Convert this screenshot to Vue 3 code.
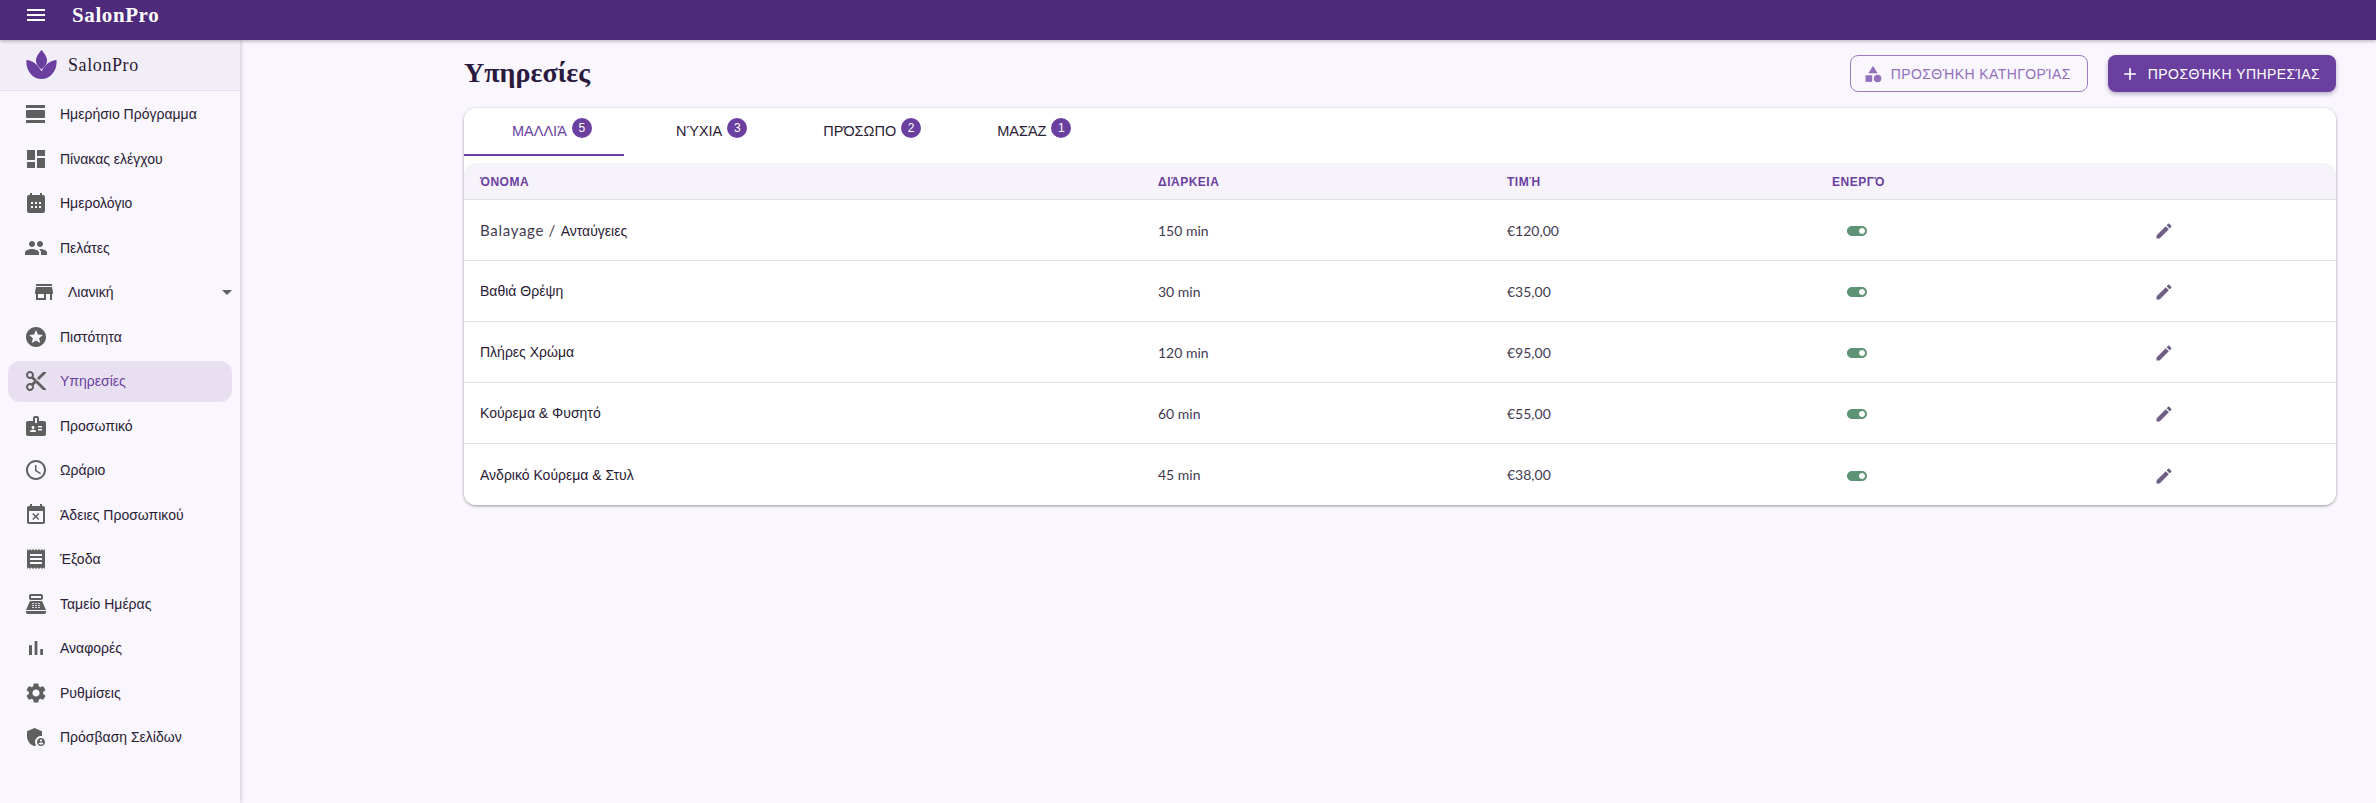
<script setup>
const nav = [
  { label: 'Ημερήσιο Πρόγραμμα', d: 'M2 21h19v-3H2v3zM20 8H3c-.55 0-1 .45-1 1v6c0 .55.45 1 1 1h17c.55 0 1-.45 1-1V9c0-.55-.45-1-1-1zM2 3v3h19V3H2z' },
  { label: 'Πίνακας ελέγχου', d: 'M3 13h8V3H3v10zm0 8h8v-6H3v6zm10 0h8V11h-8v10zm0-18v6h8V3h-8z' },
  { label: 'Ημερολόγιο', d: 'M19 4h-1V2h-2v2H8V2H6v2H5c-1.11 0-2 .9-2 2v14c0 1.1.89 2 2 2h14c1.1 0 2-.9 2-2V6c0-1.1-.9-2-2-2zM7 11h2v2H7zm4 0h2v2h-2zm4 0h2v2h-2zM7 15h2v2H7zm4 0h2v2h-2zm4 0h2v2h-2z', evenodd: true },
  { label: 'Πελάτες', d: 'M16 11c1.66 0 2.99-1.34 2.99-3S17.66 5 16 5c-1.66 0-3 1.34-3 3s1.34 3 3 3zm-8 0c1.66 0 2.99-1.34 2.99-3S9.66 5 8 5C6.34 5 5 6.34 5 8s1.34 3 3 3zm0 2c-2.33 0-7 1.17-7 3.5V19h14v-2.5c0-2.33-4.67-3.5-7-3.5zm8 0c-.29 0-.62.02-.97.05 1.16.84 1.97 1.97 1.97 3.45V19h6v-2.5c0-2.33-4.67-3.5-7-3.5z' },
  { label: 'Λιανική', sub: true, d: 'M20 4H4v2h16V4zm1 10v-2l-1-5H4l-1 5v2h1v6h10v-6h4v6h2v-6h1zm-9 4H6v-4h6v4z' },
  { label: 'Πιστότητα', d: 'M11.99 2C6.47 2 2 6.48 2 12s4.47 10 9.99 10C17.52 22 22 17.52 22 12S17.52 2 11.99 2zm4.24 16L12 15.45 7.77 18l1.12-4.81-3.73-3.23 4.92-.42L12 5l1.92 4.53 4.92.42-3.73 3.23L16.23 18z' },
  { label: 'Υπηρεσίες', active: true, d: 'M9.64 7.64c.23-.5.36-1.05.36-1.64 0-2.21-1.79-4-4-4S2 3.79 2 6s1.79 4 4 4c.59 0 1.14-.13 1.64-.36L10 12l-2.36 2.36C7.14 14.13 6.59 14 6 14c-2.21 0-4 1.79-4 4s1.79 4 4 4 4-1.79 4-4c0-.59-.13-1.14-.36-1.64L12 14l7 7h3v-1L9.64 7.64zM6 8c-1.1 0-2-.89-2-2s.9-2 2-2 2 .89 2 2-.9 2-2 2zm0 12c-1.1 0-2-.89-2-2s.9-2 2-2 2 .89 2 2-.9 2-2 2zm6-7.5c-.28 0-.5-.22-.5-.5s.22-.5.5-.5.5.22.5.5-.22.5-.5.5zM19 3l-6 6 2 2 7-7V3h-3z' },
  { label: 'Προσωπικό', d: 'M20 7h-5V4c0-1.1-.9-2-2-2h-2c-1.1 0-2 .9-2 2v3H4c-1.1 0-2 .9-2 2v11c0 1.1.9 2 2 2h16c1.1 0 2-.9 2-2V9c0-1.1-.9-2-2-2zM9 12c.83 0 1.5.67 1.5 1.5S9.83 15 9 15s-1.5-.67-1.5-1.5S8.17 12 9 12zm3 6H6v-.75c0-1 2-1.5 3-1.5s3 .5 3 1.5V18zm1-9h-2V4h2v5zm5 7.5h-4V15h4v1.5zm0-3h-4V12h4v1.5z' },
  { label: 'Ωράριο', d: 'M11.99 2C6.47 2 2 6.48 2 12s4.47 10 9.99 10C17.52 22 22 17.52 22 12S17.52 2 11.99 2zM12 20c-4.42 0-8-3.58-8-8s3.58-8 8-8 8 3.58 8 8-3.58 8-8 8zM12.5 7H11v6l5.25 3.15.75-1.23-4.5-2.67z' },
  { label: 'Άδειες Προσωπικού', d: 'M9.31 17l2.44-2.44L14.19 17l1.06-1.06-2.44-2.44 2.44-2.44L14.19 10l-2.44 2.44L9.31 10l-1.06 1.06 2.44 2.44-2.44 2.44L9.31 17zM19 3h-1V1h-2v2H8V1H6v2H5c-1.11 0-1.99.9-1.99 2L3 19c0 1.1.89 2 2 2h14c1.1 0 2-.9 2-2V5c0-1.1-.9-2-2-2zm0 16H5V8h14v11z' },
  { label: 'Έξοδα', d: 'M18 17H6v-2h12v2zm0-4H6v-2h12v2zm0-4H6V7h12v2zM3 22l1.5-1.5L6 22l1.5-1.5L9 22l1.5-1.5L12 22l1.5-1.5L15 22l1.5-1.5L18 22l1.5-1.5L21 22V2l-1.5 1.5L18 2l-1.5 1.5L15 2l-1.5 1.5L12 2l-1.5 1.5L9 2 7.5 3.5 6 2 4.5 3.5 3 2v20z' },
  { label: 'Ταμείο Ημέρας', d: 'M17 2H7c-1.1 0-2 .9-2 2v2c0 1.1.9 2 2 2h10c1.1 0 2-.9 2-2V4c0-1.1-.9-2-2-2zm0 4H7V4h10v2zm3 16H4c-1.1 0-2-.9-2-2v-1h20v1c0 1.1-.9 2-2 2zm-1.47-11.81C18.21 9.47 17.49 9 16.7 9H7.3c-.79 0-1.51.47-1.83 1.19L2 18h20l-3.47-7.81zM9.5 16h-1c-.28 0-.5-.22-.5-.5s.22-.5.5-.5h1c.28 0 .5.22.5.5s-.22.5-.5.5zm0-2h-1c-.28 0-.5-.22-.5-.5s.22-.5.5-.5h1c.28 0 .5.22.5.5s-.22.5-.5.5zm0-2h-1c-.28 0-.5-.22-.5-.5s.22-.5.5-.5h1c.28 0 .5.22.5.5s-.22.5-.5.5zm3 4h-1c-.28 0-.5-.22-.5-.5s.22-.5.5-.5h1c.28 0 .5.22.5.5s-.22.5-.5.5zm0-2h-1c-.28 0-.5-.22-.5-.5s.22-.5.5-.5h1c.28 0 .5.22.5.5s-.22.5-.5.5zm0-2h-1c-.28 0-.5-.22-.5-.5s.22-.5.5-.5h1c.28 0 .5.22.5.5s-.22.5-.5.5zm3 4h-1c-.28 0-.5-.22-.5-.5s.22-.5.5-.5h1c.28 0 .5.22.5.5s-.22.5-.5.5zm0-2h-1c-.28 0-.5-.22-.5-.5s.22-.5.5-.5h1c.28 0 .5.22.5.5s-.22.5-.5.5zm0-2h-1c-.28 0-.5-.22-.5-.5s.22-.5.5-.5h1c.28 0 .5.22.5.5s-.22.5-.5.5z' },
  { label: 'Αναφορές', d: 'M5 9.2h3V19H5zM10.6 5h2.8v14h-2.8zm5.6 8H19v6h-2.8z' },
  { label: 'Ρυθμίσεις', d: 'M19.14 12.94c.04-.3.06-.61.06-.94 0-.32-.02-.64-.07-.94l2.03-1.58c.18-.14.23-.41.12-.61l-1.92-3.32c-.12-.22-.37-.29-.59-.22l-2.39.96c-.5-.38-1.03-.7-1.62-.94l-.36-2.54c-.04-.24-.24-.41-.48-.41h-3.84c-.24 0-.43.17-.47.41l-.36 2.54c-.59.24-1.13.57-1.62.94l-2.39-.96c-.22-.08-.47 0-.59.22L2.74 8.87c-.12.21-.08.47.12.61l2.03 1.58c-.05.3-.09.63-.09.94s.02.64.07.94l-2.03 1.58c-.18.14-.23.41-.12.61l1.92 3.32c.12.22.37.29.59.22l2.39-.96c.5.38 1.03.7 1.62.94l.36 2.54c.05.24.24.41.48.41h3.84c.24 0 .44-.17.47-.41l.36-2.54c.59-.24 1.13-.56 1.62-.94l2.39.96c.22.08.47 0 .59-.22l1.92-3.32c.12-.22.07-.47-.12-.61l-2.01-1.58zM12 15.6c-1.98 0-3.6-1.62-3.6-3.6s1.62-3.6 3.6-3.6 3.6 1.62 3.6 3.6-1.62 3.6-3.6 3.6z' },
  { label: 'Πρόσβαση Σελίδων', d: 'M17 11c.34 0 .67.04 1 .09V6.27L10.5 3 3 6.27v4.91c0 4.54 3.2 8.79 7.5 9.82.55-.13 1.08-.32 1.6-.55-.69-.98-1.1-2.17-1.1-3.45 0-3.31 2.69-6 6-6zM17 13c-2.21 0-4 1.79-4 4s1.79 4 4 4 4-1.79 4-4-1.79-4-4-4zm0 1.38c.62 0 1.12.51 1.12 1.12s-.51 1.12-1.12 1.12-1.12-.51-1.12-1.12.5-1.12 1.12-1.12zm0 5.37c-.93 0-1.74-.46-2.24-1.17.05-.72 1.51-1.08 2.24-1.08s2.19.36 2.24 1.08c-.5.71-1.31 1.17-2.24 1.17z' }
];

const tabs = [
  { label: 'ΜΑΛΛΙΆ', count: 5, active: true },
  { label: 'ΝΎΧΙΑ', count: 3 },
  { label: 'ΠΡΌΣΩΠΟ', count: 2 },
  { label: 'ΜΑΣΆΖ', count: 1 }
];

// latin is the part of the name that the page's Latin webfont picks up
const rows = [
  { latin: 'Balayage / ', name: 'Ανταύγειες', time: '150 min', price: '€120,00' },
  { name: 'Βαθιά Θρέψη', time: '30 min', price: '€35,00' },
  { name: 'Πλήρες Χρώμα', time: '120 min', price: '€95,00' },
  { name: 'Κούρεμα & Φυσητό', time: '60 min', price: '€55,00' },
  { name: 'Ανδρικό Κούρεμα & Στυλ', time: '45 min', price: '€38,00' }
];
</script>

<template>
  <div class="app">
    <header class="topbar">
      <svg class="menu-icon" viewBox="0 0 24 24"><path d="M3 18h18v-2H3v2zm0-5h18v-2H3v2zm0-7v2h18V6H3z" /></svg>
      <span class="top-title">SalonPro</span>
    </header>
    <div class="body">
      <aside class="sidebar">
        <div class="brand">
          <svg class="logo" viewBox="0 0 32 32">
            <path d="M15.5 1c3 3.5 6 7.500 5.500 11.500-.5 3-2.500 5.500-5.500 8-3-2.500-5-5-5.500-8C9.500 8.500 12.500 4.500 15.500 1z" />
            <path d="M.5 11c5.500.5 11 3.500 15 11.500 4-8 9.500-11 15-11.500 1 10.500-6 19-15 19S-.5 21.500.5 11z" />
          </svg>
          <span>SalonPro</span>
        </div>
        <nav class="nav">
          <div v-for="item in nav" :key="item.label" class="nav-item" :class="{ active: item.active, sub: item.sub }">
            <svg class="nav-icon" viewBox="0 0 24 24"><path :d="item.d" :fill-rule="item.evenodd ? 'evenodd' : null" /></svg>
            <span class="nav-label">{{ item.label }}</span>
            <svg v-if="item.sub" class="caret" viewBox="0 0 24 24"><path d="M7 10l5 5 5-5z" /></svg>
          </div>
        </nav>
      </aside>
      <main class="main">
        <div class="page-head">
          <h1>Υπηρεσίες</h1>
          <div class="actions">
            <button class="btn outline">
              <svg viewBox="0 0 24 24"><path d="M12 2l-5.500 9h11z" /><circle cx="17.500" cy="17.500" r="4.500" /><path d="M3 13.500h8v8H3z" /></svg>
              ΠΡΟΣΘΉΚΗ ΚΑΤΗΓΟΡΊΑΣ
            </button>
            <button class="btn filled">
              <svg viewBox="0 0 24 24"><path d="M19 13h-6v6h-2v-6H5v-2h6V5h2v6h6v2z" /></svg>
              ΠΡΟΣΘΉΚΗ ΥΠΗΡΕΣΊΑΣ
            </button>
          </div>
        </div>
        <section class="card">
          <div class="tabs">
            <div v-for="tab in tabs" :key="tab.label" class="tab" :class="{ active: tab.active }">
              {{ tab.label }}<span class="badge">{{ tab.count }}</span>
            </div>
          </div>
          <div class="table">
            <div class="row head">
              <div>ΌΝΟΜΑ</div>
              <div>ΔΙΆΡΚΕΙΑ</div>
              <div>ΤΙΜΉ</div>
              <div>ΕΝΕΡΓΌ</div>
              <div></div>
            </div>
            <div v-for="row in rows" :key="row.name" class="row">
              <div class="name"><span v-if="row.latin" class="latin wide">{{ row.latin }}</span>{{ row.name }}</div>
              <div class="latin">{{ row.time }}</div>
              <div class="latin">{{ row.price }}</div>
              <div>
                <svg class="toggle" viewBox="0 0 24 24"><path d="M17 7H7c-2.760 0-5 2.240-5 5s2.240 5 5 5h10c2.760 0 5-2.240 5-5s-2.240-5-5-5zm0 8c-1.660 0-3-1.340-3-3s1.340-3 3-3 3 1.340 3 3-1.340 3-3 3z" /></svg>
              </div>
              <div>
                <svg class="edit" viewBox="0 0 24 24"><path d="M3 17.250V21h3.750L17.810 9.940l-3.750-3.750L3 17.250zM20.710 7.040c.39-.39.39-1.020 0-1.410l-2.340-2.340c-.39-.39-1.020-.39-1.410 0l-1.830 1.830 3.750 3.750 1.830-1.830z" /></svg>
              </div>
            </div>
          </div>
        </section>
      </main>
    </div>
  </div>
</template>

<style scoped>
.app {
  height: 803px;
  display: flex;
  flex-direction: column;
  background: #f9f6fd;
  font-family: "Liberation Sans", sans-serif;
  color: #2a2035;
  overflow: hidden;
}

.topbar {
  height: 40px;
  flex: none;
  display: flex;
  align-items: flex-start;
  padding: 3px 0 0 24px;
  box-sizing: border-box;
  gap: 24px;
  background: #4d2a7a;
  color: #fff;
  box-shadow: 0 1px 4px rgba(0, 0, 0, 0.3);
  position: relative;
  z-index: 2;
}

.menu-icon {
  width: 24px;
  height: 24px;
  fill: #fff;
}

.top-title {
  font-family: "Liberation Serif", serif;
  font-weight: 700;
  font-size: 21px;
  line-height: 24px;
  letter-spacing: 0.6px;
}

.body {
  flex: 1;
  display: flex;
  min-height: 0;
}

.sidebar {
  width: 240px;
  flex: none;
  background: #f9f6fd;
  box-shadow: 1px 0 4px rgba(60, 40, 90, 0.22);
}

.brand {
  height: 51px;
  box-sizing: border-box;
  display: flex;
  align-items: center;
  gap: 10px;
  padding-left: 26px;
  background: #f2eef7;
  border-bottom: 1px solid #e4dfea;
  font-family: "Liberation Serif", serif;
  font-size: 18px;
  letter-spacing: 0.6px;
}

.logo {
  width: 32px;
  height: 32px;
  fill: #6b3fa0;
}

.nav {
  padding-top: 2.500px;
}

.nav-item {
  height: 41px;
  margin: 0 8px 3.500px;
  padding-left: 16px;
  display: flex;
  align-items: center;
  gap: 12px;
  border-radius: 12px;
  font-size: 14px;
}

.nav-item.sub {
  padding-left: 24px;
}

.nav-item.active {
  background: #e8e0f0;
  color: #6b3fa0;
}

.nav-icon {
  width: 24px;
  height: 24px;
  flex: none;
  fill: #5f5f5f;
}

.nav-label {
  flex: 1;
}

.caret {
  width: 24px;
  height: 24px;
  fill: #5f5f5f;
  margin-right: -7px;
}

.main {
  flex: 1;
  min-width: 0;
  padding: 15px 40px 0 224px;
}

.page-head {
  height: 37px;
  display: flex;
  justify-content: space-between;
  align-items: center;
  margin-bottom: 16px;
}

h1 {
  margin: -2px 0 0;
  font-family: "Liberation Serif", serif;
  font-weight: 700;
  font-size: 28px;
  color: #2a1a3d;
}

.actions {
  display: flex;
  gap: 20px;
}

.btn {
  height: 37px;
  box-sizing: border-box;
  display: flex;
  align-items: center;
  gap: 8px;
  padding: 0 16px 0 12px;
  border-radius: 8px;
  font-family: "Liberation Sans", sans-serif;
  font-size: 14px;
  letter-spacing: 0.4px;
}

.btn svg {
  width: 20px;
  height: 20px;
  fill: currentColor;
}

.btn.outline {
  background: transparent;
  border: 1px solid #9b7dc0;
  color: #9270bb;
}

.btn.filled {
  background: #6b3fa0;
  border: none;
  color: #fff;
  box-shadow: 0 2px 4px rgba(60, 30, 100, 0.35);
}

.card {
  background: #fff;
  border-radius: 12px;
  box-shadow: 0 1px 3px rgba(0, 0, 0, 0.4);
  overflow: hidden;
}

.tabs {
  height: 48px;
  display: flex;
  background: #fff;
}

.tab {
  box-sizing: border-box;
  padding: 0 24px 1px 52px;
  display: flex;
  align-items: center;
  font-size: 14.500px;
  color: #2a2035;
  border-bottom: 2px solid transparent;
}

.tab.active {
  width: 160px;
  padding: 0 0 1px 48px;
  color: #6b3fa0;
  border-bottom-color: #6b3fa0;
}

.badge {
  width: 20px;
  height: 20px;
  margin-left: 5px;
  border-radius: 50%;
  background: #6b3fa0;
  color: #fff;
  font-size: 12px;
  display: flex;
  align-items: center;
  justify-content: center;
  transform: translateY(-3px);
}

.table {
  margin-top: 7px;
  background: #fff;
}

.row {
  display: grid;
  grid-template-columns: 678px 349px 325px 322px 1fr;
  height: 61px;
  align-items: center;
  border-bottom: 1px solid #e0e0e0;
  box-sizing: border-box;
  font-size: 14px;
}

.row:last-child {
  border-bottom: 0;
}

.row > div {
  padding-left: 16px;
  display: flex;
  align-items: center;
}

.row > .name {
  display: block;
}

.latin {
  font-family: Lato, "Liberation Sans", sans-serif;
  font-weight: 400;
  color: #443a50;
}

.latin.wide {
  font-size: 15px;
  letter-spacing: 0.7px;
}

.row.head {
  height: 37px;
  padding-top: 2px;
  background: #f6f3fa;
  font-size: 12px;
  font-weight: 700;
  letter-spacing: 0.5px;
  color: #6b3fa0;
  border-radius: 12px 12px 0 0;
}

.toggle {
  width: 24px;
  height: 24px;
  fill: #5f9375;
  margin: 2px 0 0 13px;
}

.edit {
  width: 20px;
  height: 20px;
  fill: #6f5f85;
  margin-top: 2px;
}
</style>

<style>
body {
  background: #f9f6fd;
}
</style>
